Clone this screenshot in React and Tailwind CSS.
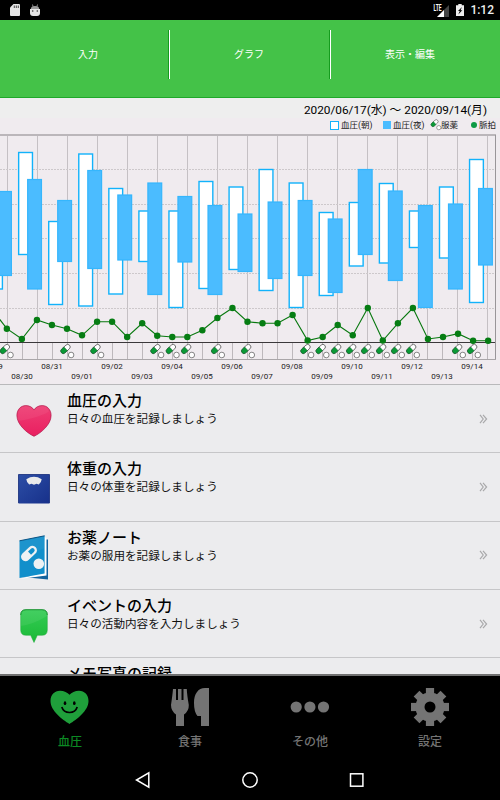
import React, { useState } from 'react';

// [morning high, morning low, evening high, evening low] in chart pixels
const PRESSURE = [
  [94, 171, 73.5, 157.5],
  [34.5, 136.5, 61.5, 171],
  [103.5, 186.5, 82.5, 143.5],
  [36, 188, 52.5, 150.5],
  [70.5, 176, 77, 142],
  [93, 143.5, 65, 176.5],
  [93, 189.5, 78.5, 144],
  [63.5, 170.5, 87.5, 176.5],
  [69, 151.5, 96, 153.5],
  [51.5, 172.5, 84, 160.5],
  [65, 189.5, 82.5, 157.5],
  [94.5, 177.5, 101, 174.5],
  [84.5, 148, 51.5, 136.5],
  [65.5, 145, 73, 162.5],
  [93, 129.5, 87.5, 189.5],
  [69, 140, 86, 171],
  [41.5, 184.5, 70.5, 147],
];

const PULSE = [
  191, 210.7, 221, 202, 207, 210.7, 217.3, 203.7, 203.7, 219, 205.3, 217.7, 219, 219, 212.3, 200, 190,
  203.7, 205.3, 205.3, 197, 222.5, 219, 207, 217.3, 190, 222.5, 205.3, 190, 221, 219, 215.7, 222.7, 222.7,
];

const PILLS = [2.7, 63.3, 93.3, 153.3, 168.7, 184, 214, 244, 303.3, 318.5, 334, 349, 364, 379, 394, 409, 455, 470];

const DAYS = [
  '08/29', '08/30', '08/31', '09/01', '09/02', '09/03', '09/04', '09/05', '09/06',
  '09/07', '09/08', '09/09', '09/10', '09/11', '09/12', '09/13', '09/14',
];

const TOP_TABS = ['入力', 'グラフ', '表示・編集'];

function Pill({ x, y }) {
  return (
    <g transform={`translate(${x} ${y})`}>
      <g transform="rotate(-43)">
        <rect x="-2.5" y="-2.5" width="11" height="5" rx="2.5" fill="#fff" stroke="#444" strokeWidth=".7" />
        <path d="M3.2 -2.5H0a2.5 2.5 0 0 0 0 5H3.2z" fill="#0a9a36" stroke="#0b5a22" strokeWidth=".5" />
      </g>
      <circle cx="7.8" cy="4" r="2.8" fill="#fff" stroke="#555" strokeWidth=".7" />
    </g>
  );
}

function Chart() {
  const points = PULSE.map((y, i) => [-8.2 + i * 15.04, y]);
  return (
    <svg width="500" height="266" viewBox="0 0 500 266" className="block shrink-0">
      {Array.from({ length: 17 }, (_, i) => (
        <path key={i} d={`M${7.5 + i * 30} 17V224`} stroke="#c5c0c4" strokeWidth="1" />
      ))}
      {Array.from({ length: 33 }, (_, i) => (
        <path key={i} d={`M${7.5 + i * 15} 225V241`} stroke="#bdb8bc" strokeWidth="1" />
      ))}
      {[51.5, 86.5, 120.5, 155.5, 190.5].map(y => (
        <path key={y} d={`M0 ${y}H495`} stroke="#cdc8cb" strokeWidth="1" strokeDasharray="2 1" />
      ))}
      <path d="M0 17H496" stroke="#bbb6ba" strokeWidth="2" />
      <path d="M495.5 17V242" stroke="#999599" strokeWidth="1" />
      <path d="M0 241.5H496" stroke="#aaa6a9" strokeWidth="1" />

      {PRESSURE.map(([mh, ml, eh, el], i) => {
        const x = -11.4 + i * 30.06;
        return (
          <g key={i}>
            <rect x={x} y={mh} width="13.8" height={ml - mh} fill="#fff" stroke="#12b2fb" strokeWidth="1.4" />
            <rect x={x + 9} y={eh} width="13.8" height={el - eh} fill="#4bbcff" stroke="#35b6fd" strokeWidth="1.2" />
          </g>
        );
      })}

      <path d="M0 224.5H495" stroke="#3b383b" strokeWidth="1" />
      <polyline points={points.map(p => p.join(',')).join(' ')} fill="none" stroke="#08780f" strokeWidth="1.1" />
      {points.map(([x, y], i) => (
        <circle key={i} cx={x} cy={y} r="3.2" fill="#067d13" />
      ))}
      {PILLS.map(x => <Pill key={x} x={x} y={233} />)}

      {DAYS.map((day, i) => (
        <text
          key={day}
          x={-8 + i * 30}
          y={i % 2 ? 261.3 : 251.3}
          textAnchor="middle"
          fill="#222"
          className="text-[8px] font-[Roboto,sans-serif]"
        >
          {day}
        </text>
      ))}
    </svg>
  );
}

function HeartIcon() {
  return (
    <svg width="36" height="34" viewBox="0 0 36 34">
      <defs>
        <linearGradient id="heart" x1="0" y1="0" x2="0" y2="1">
          <stop offset="0" stopColor="#ee3f74" />
          <stop offset="1" stopColor="#e91f60" />
        </linearGradient>
      </defs>
      <path d="M18 32.3C12 29.6 .9 21 .9 11.5C.9 5.5 4.9 1.6 9.8 1.6C13.5 1.6 16.5 3.3 18 6C19.5 3.3 22.5 1.6 26.2 1.6C31.1 1.6 35.1 5.5 35.1 11.5C35.1 21 24 29.6 18 32.3Z" fill="url(#heart)" stroke="#b01a4a" strokeWidth=".7" />
      <path d="M1.5 17C12 15.5 24 13 33 7.5C32 3.7 29.5 2 26.2 2C22.5 2 19.5 3.7 18 6.7C16.500 3.7 13.5 2 9.8 2C4 2 .3 8 1.5 17Z" fill="#fff" opacity=".06" />
    </svg>
  );
}

function ScaleIcon() {
  return (
    <svg width="32" height="30" viewBox="0 0 32 30">
      <defs>
        <linearGradient id="scale" x1="0" y1="0" x2="1" y2="1">
          <stop offset="0" stopColor="#2c4ea6" />
          <stop offset="1" stopColor="#17308a" />
        </linearGradient>
      </defs>
      <rect x=".5" y=".5" width="31" height="29" fill="url(#scale)" />
      <path d="M.5 29V.5H31.5V29" fill="none" stroke="#132a78" strokeWidth=".8" />
      <path d="M8.3 5.2Q16 .5 23.7 5.2Q23.2 9 20.8 10.5L18.5 9.8L16 10.8L13.5 9.8L11.2 10.5Q8.8 9 8.3 5.2Z" fill="#e9eaeb" />
    </svg>
  );
}

function NoteIcon() {
  return (
    <svg width="30" height="46" viewBox="0 0 30 46">
      <path d="M4 42L29 44.5V4.5H27V40Z" fill="#13639d" />
      <path d="M.5 44L27.5 40.5V3.5L25 1V37Z" fill="#fff" />
      <path d="M.5 5.8L25.6 .8V38.5L.5 43Z" fill="#118fcb" />
      <path d="M.5 24L25.6 13V.8L.5 5.8Z" fill="#fff" opacity=".05" />
      <path d="M.5 5.800L25.6 .8" stroke="#0a5384" />
      <g transform="translate(9.8 18.7) rotate(-43)">
        <rect x="-9" y="-4.5" width="18.5" height="9" rx="4.5" fill="#eef1f3" />
        <path d="M1 -2.2H5a2.2 2.2 0 0 1 0 4.4H1z" fill="#118fcb" />
      </g>
      <circle cx="19.800" cy="28.8" r="5.3" fill="#eef1f3" />
    </svg>
  );
}

function BalloonIcon() {
  return (
    <svg width="28" height="34" viewBox="0 0 28 34">
      <defs>
        <linearGradient id="balloon" x1="0" y1="0" x2="0" y2="1">
          <stop offset="0" stopColor="#35cc55" />
          <stop offset="1" stopColor="#1ab936" />
        </linearGradient>
      </defs>
      <path d="M6 .7H22Q27.3 .7 27.3 6V21Q27.3 26.3 22 26.3H17.3L14 33.5L10.7 26.3H6Q.7 26.3 .7 21V6Q.7 .7 6 .7Z" fill="url(#balloon)" stroke="#1ca838" strokeWidth=".5" />
      <path d="M1 17Q14 15 27 7V6Q27 1 22 1H6Q1 1 1 6Z" fill="#fff" opacity=".07" />
      <path d="M.7 6Q.7 .7 6 .7H22Q27.3 .7 27.3 6" fill="none" stroke="#148a2b" strokeWidth=".8" />
    </svg>
  );
}

const MENU = [
  { title: '血圧の入力', sub: '日々の血圧を記録しましょう', Icon: HeartIcon },
  { title: '体重の入力', sub: '日々の体重を記録しましょう', Icon: ScaleIcon },
  { title: 'お薬ノート', sub: 'お薬の服用を記録しましょう', Icon: NoteIcon },
  { title: 'イベントの入力', sub: '日々の活動内容を入力しましょう', Icon: BalloonIcon },
  { title: 'メモ写真の記録', sub: '', Icon: null },
];

const BOTTOM_TABS = [
  {
    label: '血圧',
    icon: (
      <>
        <path d="M19.5 37C12.500 32.5 .5 24 .5 14C.5 8 4.500 3.8 10 3.8C14 3.8 17.5 5.500 19.5 7.800C21.5 5.5 25 3.8 29 3.8C34.500 3.8 38.500 8 38.5 14C38.5 24 26.5 32.5 19.5 37Z" fill="#1f9f3b" />
        <ellipse cx="15" cy="16.2" rx="1.3" ry="1.9" fill="#000" />
        <ellipse cx="24.300" cy="16.2" rx="1.3" ry="1.9" fill="#000" />
        <path d="M11.8 20Q13.5 25.500 19.5 25.5Q25.5 25.5 27.2 20" fill="none" stroke="#000" strokeWidth="1.7" />
      </>
    ),
  },
  {
    label: '食事',
    icon: (
      <path d="M3 2H6V13H8V2H11.5V13H13.5V2H16.8Q17 8 18.8 18Q19 24 14 27.5V39H6V27.5Q1 24 1 18Q2.5 8 3 2ZM39 1V39H31V29H27.5Q24 25 24 16C24 7 28 1 35 1Z" fill="#747474" />
    ),
  },
  {
    label: 'その他',
    icon: (
      <g fill="#747474">
        <circle cx="6.2" cy="20" r="5.6" />
        <circle cx="19.9" cy="20" r="5.6" />
        <circle cx="33.5" cy="20" r="5.6" />
      </g>
    ),
  },
  {
    label: '設定',
    icon: (
      <g fill="#747474">
        {[0, 45, 90, 135].map(r => (
          <rect key={r} x="15.9" y="1" width="8.2" height="38" transform={`rotate(${r} 20 20)`} />
        ))}
        <circle cx="20" cy="20" r="14.6" />
        <circle cx="20" cy="20" r="5.5" fill="#000" />
      </g>
    ),
  },
];

function StatusBar() {
  return (
    <div className="flex h-5 shrink-0 items-center bg-black pr-[6px] pl-[10px]">
      <svg width="10" height="12" viewBox="0 0 10 12">
        <path d="M3.500 0H9Q10 0 10 1V11Q10 12 9 12H1Q0 12 0 11V3.500Z" fill="#e4e4e4" />
        <path d="M4.300 1.500V4M6.300 1.500V4M8.300 1.500V4" stroke="#444" strokeWidth="1" />
      </svg>
      <svg className="ml-[10px]" width="10" height="13" viewBox="0 0 10 13">
        <path d="M2.500 .500L3.200 3M7.500 .500L6.800 3" stroke="#aaa" strokeWidth=".8" />
        <path d="M.8 5Q.8 2 5 2Q9.200 2 9.200 5Z" fill="#999" />
        <path d="M0 5H10V9Q10 12 7 12H3Q0 12 0 9Z" fill="#e4e4e4" />
        <circle cx="2.700" cy="7" r=".8" fill="#333" />
        <circle cx="7.300" cy="7" r=".8" fill="#333" />
      </svg>
      <div className="ml-auto flex items-center">
        <svg width="17" height="13" viewBox="0 0 17 13">
          <path d="M16 1V13H4Z" fill="#444" />
          <path d="M11 6V13H4Z" fill="#fff" />
          <text x="0.500" y="6.500" fill="#fff" textLength="8" lengthAdjust="spacingAndGlyphs" className="text-[8.500px] font-bold font-[Roboto,sans-serif]">LTE</text>
        </svg>
        <svg className="ml-[6px]" width="8" height="12" viewBox="0 0 8 12">
          <path d="M2.300 0H5.700V1.200H8V12H0V1.200H2.300Z" fill="#eee" />
          <path d="M6 3L2 7H3.800L2.300 10.500L6.300 6.200H4.500Z" fill="#000" />
        </svg>
        <span className="ml-[6px] font-[Roboto,sans-serif] text-[12px] leading-none font-medium text-[#eee]">1:12</span>
      </div>
    </div>
  );
}

function Legend() {
  return (
    <div className="flex h-[14px] items-center justify-end pr-1 text-[8.5px] leading-none text-[#222]">
      <span className="mr-[2px] size-[9px] border-[1.5px] border-[#12b2fb] bg-white" />
      <span className="w-[42px]">血圧(朝)</span>
      <span className="mr-[2px] size-2 bg-[#4bbcff]" />
      <span className="w-[38px]">血圧(夜)</span>
      <svg className="mr-px overflow-visible" width="9" height="10" viewBox="0 0 9 10">
        <g transform="scale(.75)">
          <Pill x={2.6} y={6.2} />
        </g>
      </svg>
      <span className="w-[30px]">服薬</span>
      <span className="mr-[2px] size-[6px] rounded-full bg-[#0d9a45]" />
      <span>脈拍</span>
    </div>
  );
}

export default function App() {
  const [tab, setTab] = useState('血圧');

  return (
    <div className="flex h-[800px] w-[500px] flex-col overflow-hidden bg-[#ececee] font-[Roboto,'Noto_Sans_CJK_JP',sans-serif]">
      <StatusBar />

      {/* Top tabs */}
      <div className="flex h-[78px] shrink-0 justify-center border-b border-[#1fa82a] bg-[#44c248] pt-[10px] pr-[2px]">
        {TOP_TABS.map((name, i) => (
          <React.Fragment key={name}>
            {i > 0 && <span className="h-[49px] w-[2px] shrink-0 border-l border-[#159c1e] bg-white" />}
            <button className="h-[49px] w-[159px] shrink-0 text-[10px] text-white">{name}</button>
          </React.Fragment>
        ))}
      </div>

      {/* Graph */}
      <div className="flex h-[287px] shrink-0 flex-col border-b border-[#b9b9bb] bg-[#f0ebef]">
        <div className="flex h-5 shrink-0 items-center justify-end bg-[#eee] pt-[6px] pr-[13px] text-[11.8px] leading-none text-black">
          2020/06/17(水) ～ 2020/09/14(月)
        </div>
        <div className="h-0 shrink-0">
          <Legend />
        </div>
        <Chart />
      </div>

      {/* Menu list */}
      <div className="flex h-[289px] shrink-0 flex-col overflow-hidden">
        {MENU.map(({ title, sub, Icon }) => (
          <div key={title} className="flex h-[68.3px] shrink-0 border-b border-[#c6c6c8]">
            <div className="flex w-[67px] shrink-0 items-center justify-center pt-[5px]">{Icon && <Icon />}</div>
            <div className="flex-1 pt-[6px]">
              <div className="text-[15px] leading-[20px] font-medium text-black">{title}</div>
              <div className="text-[11.6px] leading-[16px] text-[#111]">{sub}</div>
            </div>
            {sub && (
              <svg className="mr-[12px] self-center" width="9" height="10" viewBox="0 0 9 10">
                <path d="M1 .8L4.2 5L1 9.2M4 .8L7.6 5L4 9.2" fill="none" stroke="#a9a9ab" strokeWidth="1.2" />
              </svg>
            )}
          </div>
        ))}
      </div>

      {/* Bottom tabs */}
      <div className="flex h-[86px] shrink-0 justify-center border-t-2 border-[#707070] bg-black pt-[11px]">
        {BOTTOM_TABS.map(({ label, icon }) => (
          <button key={label} onClick={() => setTab(label)} className="flex w-[120px] flex-col items-center">
            <svg width="40" height="40" viewBox="0 0 40 40">{icon}</svg>
            <span className={`mt-[6px] text-[12px] leading-[18px] font-medium ${tab === label ? 'text-[#0c8a24]' : 'text-[#747474]'}`}>{label}</span>
          </button>
        ))}
      </div>

      {/* Android navigation */}
      <div className="flex h-10 shrink-0 items-center justify-center bg-black">
        {[
          <path key="back" d="M15.8 2.8V17.2L3.500 10Z" />,
          <circle key="home" cx="10" cy="10" r="7.200" />,
          <rect key="recent" x="3.500" y="3.800" width="12.400" height="12.400" />,
        ].map(shape => (
          <span key={shape.key} className="flex w-[107px] justify-center">
            <svg width="20" height="20" viewBox="0 0 20 20" fill="none" stroke="#fff" strokeWidth="1.500">{shape}</svg>
          </span>
        ))}
      </div>
    </div>
  );
}
